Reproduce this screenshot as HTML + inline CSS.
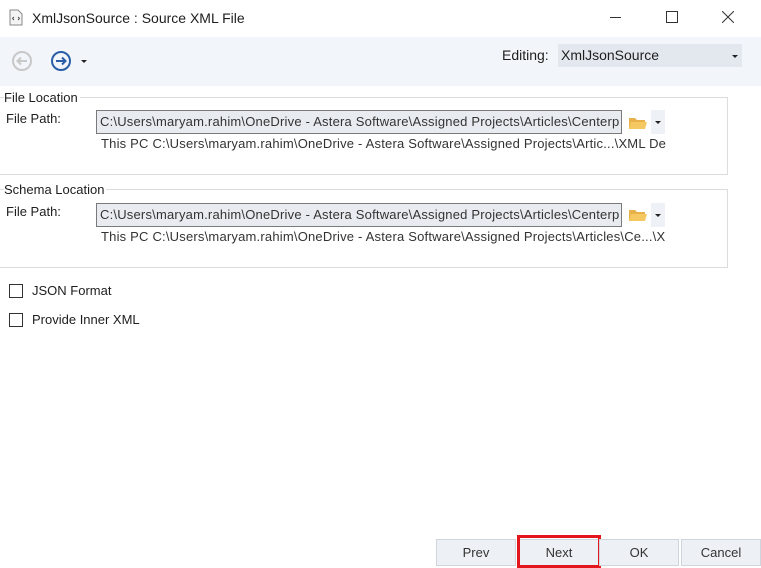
<!DOCTYPE html>
<html><head><style>
body{margin:0;width:761px;height:568px;background:#fff;font-family:"Liberation Sans",sans-serif;position:relative;overflow:hidden;font-size:13px;color:#1e1e1e}
.a{position:absolute}
.tb{left:0;top:37px;width:761px;height:49px;background:#f2f5f9}
.grp{border:1px solid #dcdcdc;border-left:none}
.leg{background:#fff;font-size:13px;padding-right:2px}
.inp{height:22px;border:1px solid #7a7a7a;background:#e8ecf1;font-size:13px;line-height:22px;padding-left:3px;white-space:nowrap;overflow:hidden;color:#333;letter-spacing:0.2px}
.sub{font-size:13px;color:#333;white-space:nowrap;letter-spacing:0.2px;overflow:hidden}
.btn{top:539px;height:27px;background:#edf1f6;border:1px solid #cfd5dc;box-sizing:border-box;text-align:center;line-height:26px;font-size:13px;color:#333}
.cb{width:12px;height:12px;border:1px solid #333;background:#fff}
</style></head><body>
<svg class="a" style="left:9px;top:9px" width="14" height="17"><path d="M1 1h8l4 4v11H1z" fill="#f4f4f4" stroke="#888"/><path d="M5 8l-1.5 1.5L5 11M9 8l1.5 1.5L9 11" stroke="#555" fill="none"/></svg>
<div class="a" style="left:32px;top:10px;font-size:14px">XmlJsonSource : Source XML File</div>
<div class="a" style="left:610px;top:17px;width:11px;height:1px;background:#333"></div>
<div class="a" style="left:666px;top:11px;width:10px;height:10px;border:1px solid #333"></div>
<svg class="a" style="left:722px;top:11px" width="12" height="12"><path d="M0 0L12 12M12 0L0 12" stroke="#333"/></svg>
<div class="a tb"></div>
<svg class="a" style="left:11px;top:50px" width="22" height="22"><circle cx="11" cy="11" r="9" fill="none" stroke="#c8c8c8" stroke-width="2"/><path d="M16 11H7M10 7.5L6.5 11 10 14.5" stroke="#c8c8c8" stroke-width="2" fill="none"/></svg>
<svg class="a" style="left:50px;top:50px" width="22" height="22"><circle cx="11" cy="11" r="9" fill="none" stroke="#2a5fa8" stroke-width="2"/><path d="M6 11H15M12 7.5L15.5 11 12 14.5" stroke="#2a5fa8" stroke-width="2" fill="none"/></svg>
<div class="a" style="left:81px;top:60px;border-left:3px solid transparent;border-right:3px solid transparent;border-top:3px solid #222"></div>
<div class="a" style="left:502px;top:47px;font-size:14px">Editing:</div>
<div class="a" style="left:558px;top:44px;width:184px;height:23px;background:#e3e8ef"></div>
<div class="a" style="left:561px;top:47px;font-size:14px">XmlJsonSource</div>
<div class="a" style="left:732px;top:55px;border-left:3px solid transparent;border-right:3px solid transparent;border-top:3px solid #222"></div>

<div class="a grp" style="left:0;top:97px;width:727px;height:76px"></div>
<div class="a leg" style="left:4px;top:90px">File Location</div>
<div class="a" style="left:6px;top:111px">File Path:</div>
<div class="a inp" style="left:96px;top:110px;width:521px">C:\Users\maryam.rahim\OneDrive - Astera Software\Assigned Projects\Articles\Centerp</div>
<svg class="a" style="left:628px;top:115px" width="20" height="16"><path d="M1 3h6l2 2h8v9H1z" fill="#e8b24a"/><path d="M3 7h16l-2 7H1z" fill="#f5c862"/></svg>
<div class="a" style="left:651px;top:110px;width:14px;height:24px;background:#eef1f5"></div>
<div class="a" style="left:655px;top:121px;border-left:3px solid transparent;border-right:3px solid transparent;border-top:3px solid #222"></div>
<div class="a sub" style="left:101px;top:136px;width:566px">This PC C:\Users\maryam.rahim\OneDrive - Astera Software\Assigned Projects\Artic...\XML De</div>

<div class="a grp" style="left:0;top:189px;width:727px;height:77px"></div>
<div class="a leg" style="left:4px;top:182px">Schema Location</div>
<div class="a" style="left:6px;top:204px">File Path:</div>
<div class="a inp" style="left:96px;top:203px;width:521px">C:\Users\maryam.rahim\OneDrive - Astera Software\Assigned Projects\Articles\Centerp</div>
<svg class="a" style="left:628px;top:207px" width="20" height="16"><path d="M1 3h6l2 2h8v9H1z" fill="#e8b24a"/><path d="M3 7h16l-2 7H1z" fill="#f5c862"/></svg>
<div class="a" style="left:651px;top:203px;width:14px;height:24px;background:#eef1f5"></div>
<div class="a" style="left:655px;top:214px;border-left:3px solid transparent;border-right:3px solid transparent;border-top:3px solid #222"></div>
<div class="a sub" style="left:101px;top:229px;width:566px">This PC C:\Users\maryam.rahim\OneDrive - Astera Software\Assigned Projects\Articles\Ce...\X</div>

<div class="a cb" style="left:9px;top:284px"></div>
<div class="a" style="left:32px;top:283px">JSON Format</div>
<div class="a cb" style="left:9px;top:313px"></div>
<div class="a" style="left:32px;top:312px">Provide Inner XML</div>

<div class="a btn" style="left:436px;width:80px">Prev</div>
<div class="a btn" style="left:519px;width:80px">Next</div>
<div class="a" style="left:517px;top:535px;width:78px;height:27px;border:3px solid #e3161e"></div>
<div class="a btn" style="left:599px;width:80px">OK</div>
<div class="a btn" style="left:681px;width:80px">Cancel</div>
</body></html>
